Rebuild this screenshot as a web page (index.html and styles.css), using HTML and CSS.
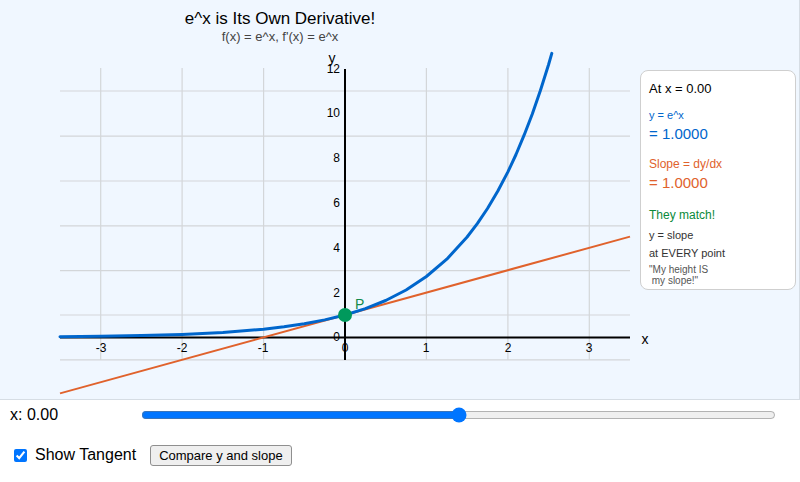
FILE: index.html
```html
<!DOCTYPE html>
<html>
<head>
<meta charset="utf-8">
<link rel="stylesheet" href="styles.css">
</head>
<body>
<div class="panel">
  <svg class="plot" width="800" height="399" viewBox="0 0 800 399" xmlns="http://www.w3.org/2000/svg">
    <text class="title" x="280" y="24" text-anchor="middle">e^x is Its Own Derivative!</text>
    <text class="subtitle" x="280" y="41" text-anchor="middle">f(x) = e^x, f'(x) = e^x</text>
    <g class="grid">
      <line x1="100.7" y1="68" x2="100.7" y2="360"/>
      <line x1="182.1" y1="68" x2="182.1" y2="360"/>
      <line x1="263.6" y1="68" x2="263.6" y2="360"/>
      <line x1="426.4" y1="68" x2="426.4" y2="360"/>
      <line x1="507.9" y1="68" x2="507.9" y2="360"/>
      <line x1="589.3" y1="68" x2="589.3" y2="360"/>
      <line x1="60" y1="91" x2="630" y2="91"/>
      <line x1="60" y1="136.2" x2="630" y2="136.2"/>
      <line x1="60" y1="181" x2="630" y2="181"/>
      <line x1="60" y1="225.8" x2="630" y2="225.8"/>
      <line x1="60" y1="270.6" x2="630" y2="270.6"/>
      <line x1="60" y1="315" x2="630" y2="315"/>
      <line x1="60" y1="359.8" x2="630" y2="359.8"/>
    </g>
    <g class="axis">
      <line x1="60" y1="337.4" x2="630" y2="337.4"/>
      <line x1="345" y1="69" x2="345" y2="360"/>
    </g>
    <g class="ticks">
      <text x="101" y="352" text-anchor="middle">-3</text>
      <text x="182" y="352" text-anchor="middle">-2</text>
      <text x="263" y="352" text-anchor="middle">-1</text>
      <text x="345" y="352" text-anchor="middle">0</text>
      <text x="426" y="352" text-anchor="middle">1</text>
      <text x="508" y="352" text-anchor="middle">2</text>
      <text x="589" y="352" text-anchor="middle">3</text>
      <text x="340" y="341" text-anchor="end">0</text>
      <text x="340" y="297" text-anchor="end">2</text>
      <text x="340" y="252" text-anchor="end">4</text>
      <text x="340" y="207" text-anchor="end">6</text>
      <text x="340" y="162" text-anchor="end">8</text>
      <text x="340" y="117" text-anchor="end">10</text>
      <text x="340" y="73" text-anchor="end">12</text>
    </g>
    <text class="axlabel" x="332" y="63" text-anchor="middle">y</text>
    <text class="axlabel" x="645" y="344" text-anchor="middle">x</text>
    <line class="tangent" x1="60" y1="393.4" x2="630" y2="236.6"/>
    <polyline class="curve" points="60,336.7 100.7,336.3 141.4,335.6 182.1,334.4 222.9,332.4 263.6,329.2 284,326.8 304.3,323.8 324.7,319.9 345,315 365.4,308.6 385.7,300.5 406.1,290 426.4,276.5 446.8,259.2 467.1,237 477.3,223.7 487.5,208.5 497.7,191.3 507.9,171.9 516,154.5 524.1,135.2 532.3,114 540.4,90.5 548.6,64.5 551.8,53.4"/>
    <circle class="dot" cx="345" cy="315" r="7"/>
    <text class="plabel" x="355" y="309">P</text>
  </svg>
  <div class="info">
    <div class="at">At x = 0.00</div>
    <div class="blue small">y = e^x</div>
    <div class="blue big">= 1.0000</div>
    <div class="orange mid">Slope = dy/dx</div>
    <div class="orange big">= 1.0000</div>
    <div class="green mid">They match!</div>
    <div class="note first">y = slope</div>
    <div class="note">at EVERY point</div>
    <div class="quote">"My height IS
 my slope!"</div>
  </div>
</div>
<div class="row1">
  <span class="xval">x: 0.00</span>
  <input class="slider" type="range" min="-3.5" max="3.5" step="0.01" value="0">
</div>
<div class="row2">
  <label class="check"><input type="checkbox" checked> Show Tangent</label>
  <button class="btn">Compare y and slope</button>
</div>
</body>
</html>
```

FILE: styles.css
```css
html, body {
  margin: 0;
  padding: 0;
  background: #ffffff;
  font-family: "Liberation Sans", Arial, sans-serif;
  color: #000;
}
.panel {
  position: relative;
  width: 799px;
  height: 399px;
  background: #f0f7ff;
  border-right: 1px solid #d6dde4;
  border-bottom: 1px solid #d6dde4;
}
.plot {
  display: block;
  font-family: "Liberation Sans", Arial, sans-serif;
}
.title { font-size: 17px; fill: #000; }
.subtitle { font-size: 13px; fill: #444; }
.grid line { stroke: #d3d6d9; stroke-width: 1.2; }
.axis line { stroke: #000; stroke-width: 2; }
.ticks text { font-size: 12px; fill: #000; }
.axlabel { font-size: 14px; fill: #000; }
.tangent { stroke: #e0622c; stroke-width: 2; }
.curve { fill: none; stroke: #0066cc; stroke-width: 3; stroke-linejoin: round; stroke-linecap: round; }
.dot { fill: #00995c; }
.plabel { font-size: 14px; fill: #138a4a; }
.info {
  position: absolute;
  left: 640px;
  top: 70px;
  width: 146px;
  height: 214px;
  padding: 4px 0 0 8px;
  background: #ffffff;
  border: 1px solid #cfcfcf;
  border-radius: 8px;
}
.info div { white-space: pre; }
.at { font-size: 13px; line-height: 16px; margin-top: 6px; }
.blue { color: #0066cc; }
.orange { color: #e0622c; }
.green { color: #0a8a3a; }
.small { font-size: 11px; line-height: 14px; margin-top: 11px; }
.big { font-size: 15px; line-height: 18px; margin-top: 3px; }
.mid { font-size: 12px; line-height: 14px; margin-top: 14px; }
.green.mid { margin-top: 16px; }
.note { font-size: 11px; line-height: 14px; color: #333; margin-top: 4px; }
.note.first { margin-top: 6px; }
.quote { font-size: 10px; line-height: 10.5px; color: #555; margin-top: 5px; }
.row1 {
  display: flex;
  align-items: center;
  height: 30px;
  padding-left: 10px;
}
.xval { font-size: 16px; width: 131px; }
.slider {
  width: 635px;
  margin: 0;
  accent-color: #0075ff;
}
.row2 {
  display: flex;
  align-items: center;
  height: 50px;
  padding-left: 10px;
}
.check {
  font-size: 16px;
  display: flex;
  align-items: center;
}
.check input { margin: 3px 8px 3px 4px; }
.btn {
  margin-left: 14px;
  font-family: "Liberation Sans", Arial, sans-serif;
  font-size: 13px;
  padding: 2px 8px;
  background: #efefef;
  border: 1px solid #8f8f8f;
  border-radius: 3px;
}
```
